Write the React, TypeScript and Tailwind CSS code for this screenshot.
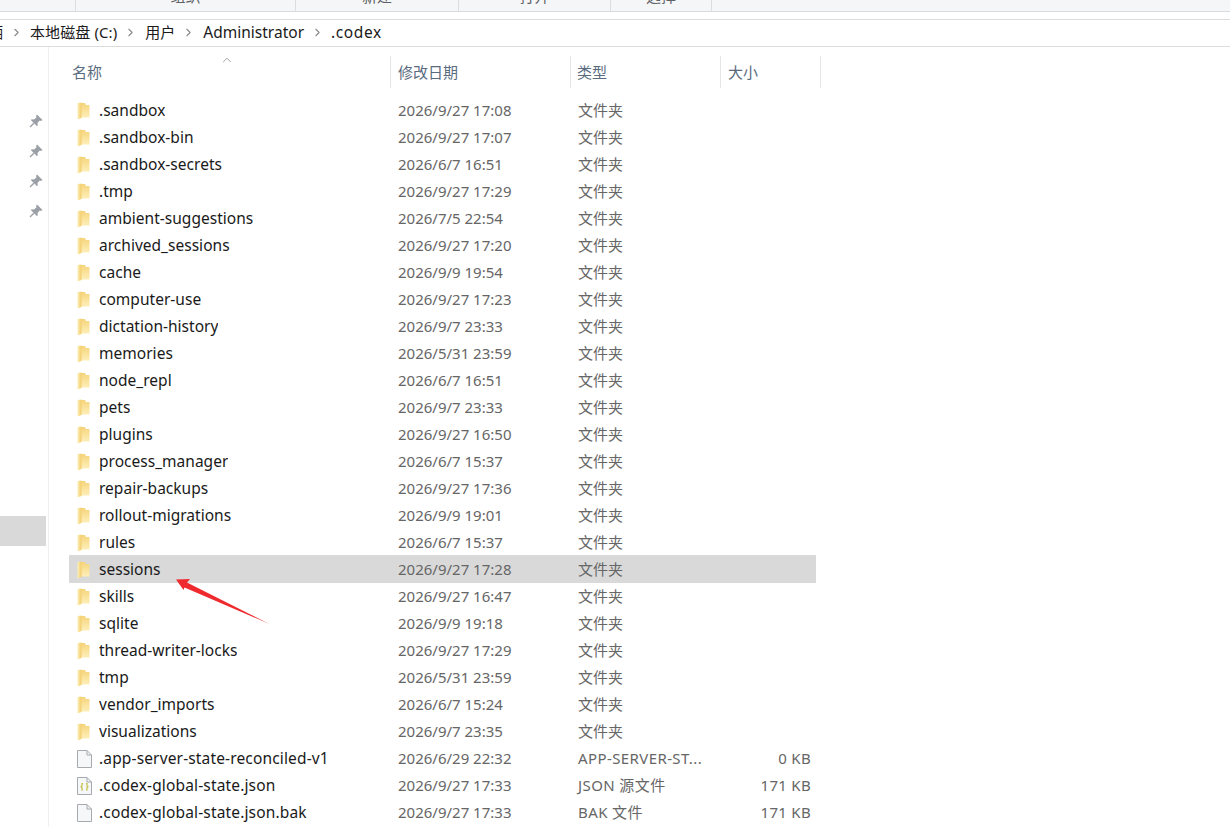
import { ChevronRight, ChevronUp } from "lucide-react";

const font = "font-['Noto_Sans','Noto_Sans_CJK_SC',sans-serif]";

type Row = { name: string; date: string; type: string; size?: string; icon?: "file" | "json" };

const rows: Row[] = [
  { name: ".sandbox", date: "2026/9/27 17:08", type: "文件夹" },
  { name: ".sandbox-bin", date: "2026/9/27 17:07", type: "文件夹" },
  { name: ".sandbox-secrets", date: "2026/6/7 16:51", type: "文件夹" },
  { name: ".tmp", date: "2026/9/27 17:29", type: "文件夹" },
  { name: "ambient-suggestions", date: "2026/7/5 22:54", type: "文件夹" },
  { name: "archived_sessions", date: "2026/9/27 17:20", type: "文件夹" },
  { name: "cache", date: "2026/9/9 19:54", type: "文件夹" },
  { name: "computer-use", date: "2026/9/27 17:23", type: "文件夹" },
  { name: "dictation-history", date: "2026/9/7 23:33", type: "文件夹" },
  { name: "memories", date: "2026/5/31 23:59", type: "文件夹" },
  { name: "node_repl", date: "2026/6/7 16:51", type: "文件夹" },
  { name: "pets", date: "2026/9/7 23:33", type: "文件夹" },
  { name: "plugins", date: "2026/9/27 16:50", type: "文件夹" },
  { name: "process_manager", date: "2026/6/7 15:37", type: "文件夹" },
  { name: "repair-backups", date: "2026/9/27 17:36", type: "文件夹" },
  { name: "rollout-migrations", date: "2026/9/9 19:01", type: "文件夹" },
  { name: "rules", date: "2026/6/7 15:37", type: "文件夹" },
  { name: "sessions", date: "2026/9/27 17:28", type: "文件夹" },
  { name: "skills", date: "2026/9/27 16:47", type: "文件夹" },
  { name: "sqlite", date: "2026/9/9 19:18", type: "文件夹" },
  { name: "thread-writer-locks", date: "2026/9/27 17:29", type: "文件夹" },
  { name: "tmp", date: "2026/5/31 23:59", type: "文件夹" },
  { name: "vendor_imports", date: "2026/6/7 15:24", type: "文件夹" },
  { name: "visualizations", date: "2026/9/7 23:35", type: "文件夹" },
  { name: ".app-server-state-reconciled-v1", date: "2026/6/29 22:32", type: "APP-SERVER-ST...", size: "0 KB", icon: "file" },
  { name: ".codex-global-state.json", date: "2026/9/27 17:33", type: "JSON 源文件", size: "171 KB", icon: "json" },
  { name: ".codex-global-state.json.bak", date: "2026/9/27 17:33", type: "BAK 文件", size: "171 KB", icon: "file" },
];

const FolderIcon = () => (
  <svg width="13" height="18" viewBox="0 0 13 18" className="shrink-0">
    <defs>
      <linearGradient id="foldBody" x1="0" y1="0" x2="0" y2="1">
        <stop offset="0" stopColor="#f5d47c" />
        <stop offset="0.55" stopColor="#fae39c" />
        <stop offset="1" stopColor="#fdeeb8" />
      </linearGradient>
      <linearGradient id="foldFlap" x1="0" y1="0" x2="1" y2="0">
        <stop offset="0" stopColor="#fdeeb8" />
        <stop offset="1" stopColor="#f2cc6a" />
      </linearGradient>
    </defs>
    <path d="M4 1h4l1 2h3.5v12.5H4z" fill="url(#foldBody)" />
    <path d="M0.5 1L4.5 0.5V16L0.5 17.5z" fill="url(#foldFlap)" />
  </svg>
);

const FileIcon = ({ json }: { json?: boolean }) => (
  <svg width="15" height="18" viewBox="0 0 15 18" className="shrink-0">
    <path d="M.5.5h9.5l4.5 4.5v12.5H.5z" fill="#f5f7f8" stroke="#a6aaae" />
    <path d="M10 .5V5h4.5" fill="none" stroke="#a6aaae" />
    {json && (
      <path
        d="M6 6.5H5v2.5l-1 .8 1 .8V13h1M9 6.5h1v2.5l1 .8-1 .8V13H9"
        fill="none"
        stroke="#c4be4a"
        strokeWidth="1.2"
      />
    )}
  </svg>
);

const PinIcon = () => (
  <svg width="14" height="14" viewBox="0 0 14 14" className="shrink-0">
    <path
      d="M8 .5L13.5 6 12 7l-1.2-.6L8.5 9l.3 2.5-1 .5L2 6.2l.5-1 2.5.3 2.6-2.3L7 2z"
      fill="#9aa0a6"
    />
    <path d="M4.8 9.2L1 13" stroke="#9aa0a6" strokeWidth="1.3" />
  </svg>
);

const Sep = () => <ChevronRight size={13} strokeWidth={2} className="mx-[7px] text-[#8a8a8a]" />;

export default function App() {
  return (
    <div className={`${font} h-[827px] w-[1230px] overflow-hidden bg-white text-[15px]`}>
      {/* ribbon, cut off at the top of the shot */}
      <div className="flex h-[12px] items-end overflow-hidden border-b border-[#dadbdc] bg-[#f5f6f7] pl-[75px] text-[15px] leading-[20px] text-[#5f6368]">
        <div className="flex h-[11px] w-[220px] justify-center border-l border-[#dcdddf]">
          <span className="-mt-[14px]">组织</span>
        </div>
        <div className="flex h-[11px] w-[163px] justify-center border-l border-[#dcdddf]">
          <span className="-mt-[14px]">新建</span>
        </div>
        <div className="flex h-[11px] w-[152px] justify-center border-l border-[#dcdddf]">
          <span className="-mt-[14px]">打开</span>
        </div>
        <div className="flex h-[11px] w-[102px] justify-center border-x border-[#dcdddf]">
          <span className="-mt-[14px]">选择</span>
        </div>
      </div>

      {/* address bar */}
      <div className="mt-[7px] flex h-[28px] items-center overflow-hidden border-y border-[#dddddd] pb-px text-[#1a1a1a]">
        <span className="-ml-[12px]">硒</span>
        <Sep />
        <span className="tracking-[0.1px]">本地磁盘 (C:)</span>
        <Sep />
        <span className="ml-px">用户</span>
        <Sep />
        <span className="ml-px text-[15.5px]">Administrator</span>
        <Sep />
        <span className="text-[15.5px] tracking-[0.6px]">.codex</span>
      </div>

      <div className="flex">
        {/* nav pane */}
        <div className="relative h-[781px] w-[49px] shrink-0 border-r border-[#f0f0f0]">
          <div className="flex flex-col items-end gap-[16px] pt-[67px] pr-[5px]">
            {[0, 1, 2, 3].map((i) => (
              <PinIcon key={i} />
            ))}
          </div>
          <div className="absolute top-[469px] left-0 h-[30px] w-[46px] bg-[#d9d9d9]" />
        </div>

        {/* file list */}
        <div className="relative min-w-0 flex-1">
          <div className="mt-[9px] flex h-[32px] items-center text-[#5a6b80]">
            <div className="w-[341px] pl-[23px]">名称</div>
            <div className="h-full w-[180px] border-l border-[#e5e5e5] pl-[7px] leading-[32px]">修改日期</div>
            <div className="h-full w-[150px] border-l border-[#e5e5e5] pl-[6px] leading-[32px]">类型</div>
            <div className="h-full w-[101px] border-x border-[#e5e5e5] pl-[7px] leading-[32px]">大小</div>
          </div>
          <ChevronUp size={14} strokeWidth={1.2} className="absolute top-[6px] left-[171px] text-[#7a7a7a]" />

          <div className="mt-[9px] ml-[20px] w-[747px]">
            {rows.map((r) => (
              <div
                key={r.name}
                className={`flex items-center ${r.name === "sessions" ? "-mt-px h-[28px] bg-[#d9d9d9] pt-px" : "h-[27px]"}`}
              >
                <div className="flex w-[322px] items-center">
                  <span className="flex w-[30px] justify-start pl-[8px]">
                    {r.icon ? <FileIcon json={r.icon === "json"} /> : <FolderIcon />}
                  </span>
                  <span className={`truncate text-[15.5px] text-[#1a1a1a] ${r.icon ? "tracking-[0.15px]" : "tracking-[0.02px]"}`}>
                    {r.name}
                  </span>
                </div>
                <div className="w-[180px] pl-[7px] text-[#666666]">{r.date}</div>
                <div className={`w-[150px] pl-[7px] text-[#666666] ${r.icon ? "tracking-[0.4px]" : ""}`}>{r.type}</div>
                <div className="w-[90px] text-right tracking-[0.3px] text-[#666666]">{r.size}</div>
              </div>
            ))}
          </div>

          {/* annotation arrow */}
          <svg width="100" height="52" viewBox="0 0 100 52" className="pointer-events-none absolute top-[529px] left-[126px]">
            <path d="M1 3.5L15 3L12 6.5L94.5 48L9.5 11.5L8.5 14z" fill="#ee2a2e" />
          </svg>
        </div>
      </div>
    </div>
  );
}
